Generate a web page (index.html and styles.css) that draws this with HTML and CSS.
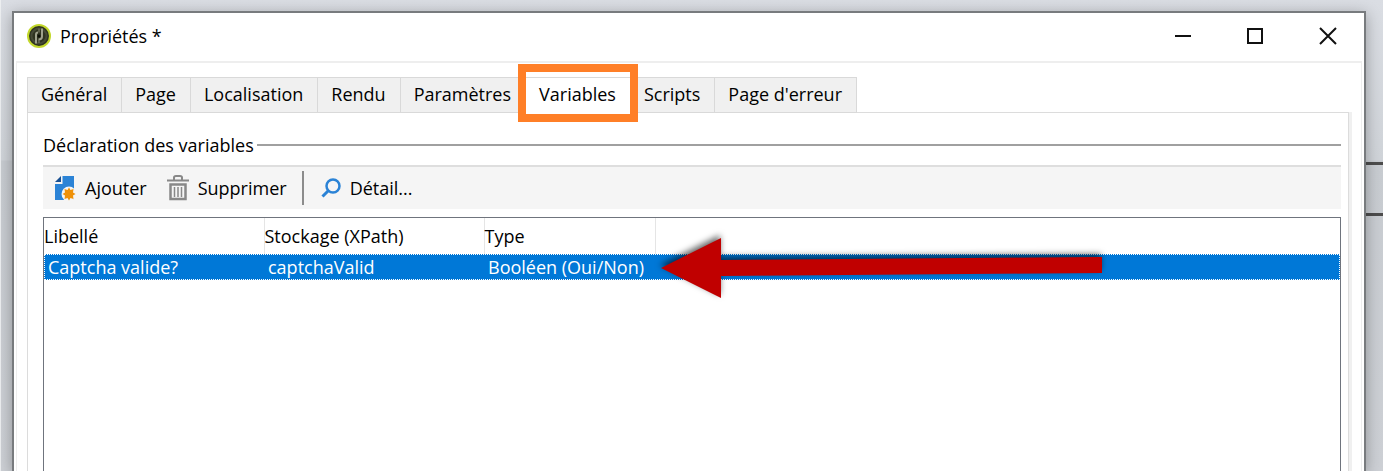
FILE: index.html
```html
<!DOCTYPE html>
<html lang="fr">
<head>
    <meta charset="UTF-8">
    <meta name="viewport" content="width=device-width, initial-scale=1.0">
    <title>Propriétés</title>
    <link rel="stylesheet" href="styles.css">
</head>
<body>
    <div class="backdrop"><div class="backdrop-band"></div></div>

    <div class="window">
        <div class="titlebar">
            <svg class="app-icon" viewBox="0 0 24 24">
                <circle cx="12" cy="12" r="11" fill="#2f331f" stroke="#c3d82c" stroke-width="2"/>
                <circle cx="12" cy="12" r="7.5" fill="none" stroke="#454936" stroke-width="2"/>
                <path d="M9 19.500V10.500Q9 8.500 11 8.500M11.500 15.500Q15 15.500 15 12.500V4.500" fill="none" stroke="#9fa18c" stroke-width="2"/>
                <path d="M12 8.500V4.500M12 19V16" fill="none" stroke="#6d705a" stroke-width="1.500"/>
                <circle cx="12" cy="12" r="1.500" fill="#0d0f06"/>
            </svg>
            <span class="title">Propriétés *</span>
            <div class="window-buttons">
                <button type="button" aria-label="Réduire"><svg viewBox="0 0 18 18"><path d="M1 9H17"/></svg></button>
                <button type="button" aria-label="Agrandir"><svg viewBox="0 0 18 18"><path d="M2 2H16V16H2Z"/></svg></button>
                <button type="button" aria-label="Fermer"><svg viewBox="0 0 18 18"><path d="M2 1L18 17M18 1L2 17"/></svg></button>
            </div>
        </div>

        <div class="client">
            <div class="tabs" role="tablist">
                <button type="button" class="tab" role="tab">Général</button>
                <button type="button" class="tab" role="tab">Page</button>
                <button type="button" class="tab" role="tab">Localisation</button>
                <button type="button" class="tab" role="tab">Rendu</button>
                <button type="button" class="tab" role="tab">Paramètres</button>
                <button type="button" class="tab active" role="tab" aria-selected="true">Variables</button>
                <button type="button" class="tab" role="tab">Scripts</button>
                <button type="button" class="tab" role="tab">Page d'erreur</button>
            </div>

            <div class="panel">
                <div class="section-title">Déclaration des variables</div>

                <div class="toolbar">
                    <button type="button" class="tool">
                        <svg width="22" height="26" viewBox="0 0 22 26">
                            <path d="M8.500 1H20V25H1V9H8.500Z" fill="#2b83d6"/>
                            <path d="M1 7L7 1V7Z" fill="#174f91"/>
                            <circle cx="15" cy="19" r="7.500" fill="#f5f5f5"/>
                            <path d="M15 12.500L16.500 15L19.500 14L19 17.500L21.500 19L19 20.500L19.500 24L16.500 23L15 25.500L13.500 23L10.500 24L11 20.500L8.500 19L11 17.500L10.500 14L13.500 15Z" fill="#ef9108"/>
                        </svg>
                        Ajouter
                    </button>
                    <button type="button" class="tool">
                        <svg width="22" height="26" viewBox="0 0 22 26" fill="none" stroke="#888" stroke-width="2">
                            <path d="M0 5.500H22M7 5V2.500Q7 1 9 1H13Q15 1 15 2.500V5"/>
                            <path d="M3.500 9.500H18.500V24H3.500Z" stroke-width="2.500"/>
                            <path d="M7.500 12V22M11 12V22M14.500 12V22" stroke-width="1.500"/>
                        </svg>
                        Supprimer
                    </button>
                    <span class="separator"></span>
                    <button type="button" class="tool">
                        <svg width="20" height="20" viewBox="0 0 20 20" fill="none" stroke="#2b83d6">
                            <circle cx="12" cy="8" r="6.500" stroke-width="2.500"/>
                            <path d="M7.500 12.500L1.500 18.500" stroke-width="3"/>
                        </svg>
                        Détail...
                    </button>
                </div>

                <div class="list">
                    <table>
                        <colgroup>
                            <col class="col-label">
                            <col class="col-storage">
                            <col class="col-type">
                            <col>
                        </colgroup>
                        <thead>
                            <tr><th>Libellé</th><th>Stockage (XPath)</th><th>Type</th><td></td></tr>
                        </thead>
                        <tbody>
                            <tr class="selected"><td>Captcha valide?</td><td>captchaValid</td><td>Booléen (Oui/Non)</td><td></td></tr>
                        </tbody>
                    </table>
                    <svg class="arrow" viewBox="0 0 442 60"><path d="M0 30L60 0V22L441 19V35L60 38V60Z" fill="#c00000"/></svg>
                </div>
            </div>
        </div>
    </div>
</body>
</html>
```
FILE: styles.css
```css
* {
    box-sizing: border-box;
}

body {
    margin: 0;
    padding: 11px 17px 0 12px;
    height: 100vh;
    overflow: hidden;
    display: flex;
    background-color: #d5d9de;
    font-family: "Open Sans", "Noto Sans", sans-serif;
    font-size: 18px;
    line-height: 24px;
    color: #000;
}

button {
    font: inherit;
    color: inherit;
    border: none;
    background: none;
    padding: 0;
}

svg {
    flex: none;
}

/* fenêtre en arrière-plan */
.backdrop {
    position: absolute;
    inset: 0;
    border-left: 1px solid #eceef0;
    background: linear-gradient(#dadde3, #d0d4d9 160px, #c8ccd1 161px, #cdd0d5);
}

.backdrop-band {
    position: absolute;
    top: 162px;
    right: 0;
    width: 40px;
    height: 54px;
    border: solid #4d4d4d;
    border-width: 3px 0;
}

.window {
    position: relative;
    flex: 1;
    display: flex;
    flex-direction: column;
    border: 2px solid #787b7e;
    border-bottom: none;
    background-color: #fff;
    box-shadow: 0 3px 14px rgba(0, 0, 0, 0.3);
}

.titlebar {
    display: flex;
    align-items: center;
    height: 48px;
    padding: 0 1px 2px 13px;
}

.app-icon {
    width: 24px;
    height: 24px;
}

.title {
    margin-left: 9px;
}

.window-buttons {
    display: flex;
    margin-left: auto;
}

.window-buttons button {
    width: 72px;
    height: 44px;
    display: flex;
    align-items: center;
    justify-content: center;
}

.window-buttons svg {
    width: 18px;
    height: 18px;
    overflow: visible;
    fill: none;
    stroke: #111;
    stroke-width: 2;
}

.client {
    flex: 1;
    display: flex;
    flex-direction: column;
    margin: 0 2px;
    padding: 14px 12px 0 10px;
    border: solid #eee;
    border-width: 2px 1px 0;
}

.tabs {
    display: flex;
    height: 36px;
}

.tab {
    position: relative;
    padding: 0 14px 2px 13px;
    margin-right: -1px;
    border: 1px solid #d9d9d9;
    background-color: #f0f0f0;
}

.tab.active {
    z-index: 1;
    background-color: #fff;
    border-bottom-color: #fff;
}

.tab.active::after {
    content: "";
    position: absolute;
    inset: -14px -8px -10px -8px;
    border: 8px solid #ff7f27;
}

.panel {
    flex: 1;
    display: flex;
    flex-direction: column;
    margin-top: -1px;
    padding: 20px 7px 0 15px;
    border: 1px solid #dcdcdc;
    border-bottom: none;
    box-shadow: 3px 0 0 #f0f0f0;
}

.section-title {
    display: flex;
    align-items: center;
    gap: 3px;
}

.section-title::after {
    content: "";
    flex: 1;
    height: 2px;
    background-color: #a0a0a0;
}

.toolbar {
    display: flex;
    align-items: center;
    height: 44px;
    margin-top: 8px;
    padding: 0 11px;
    border-top: 2px solid #dedede;
    background-color: #f5f5f5;
}

.tool {
    display: flex;
    align-items: center;
    gap: 9px;
    margin-right: 20px;
}

.separator {
    width: 2px;
    height: 34px;
    margin: 0 17px 0 -5px;
    background-color: #8c8c8c;
}

.list {
    position: relative;
    flex: 1;
    margin-top: 8px;
    border: 1px solid #6f747d;
    border-bottom: none;
}

table {
    width: 100%;
    table-layout: fixed;
    border-collapse: collapse;
}

.col-label,
.col-storage {
    width: 220px;
}

.col-type {
    width: 171px;
}

th,
td {
    padding: 0;
    font-weight: normal;
    text-align: left;
    white-space: nowrap;
}

thead tr {
    height: 36px;
}

th {
    border-right: 1px solid #e5e5e5;
}

.selected {
    height: 26px;
    background-color: #0078d7;
    color: #fff;
    outline: 1px dotted #fff;
    outline-offset: -1px;
}

.selected td {
    padding-left: 4px;
}

/* flèche de repère */
.arrow {
    position: absolute;
    top: 20px;
    left: 617px;
    width: 442px;
    height: 60px;
    overflow: visible;
    filter: drop-shadow(-1px -3px 3px rgba(0, 0, 0, 0.6));
}
```
